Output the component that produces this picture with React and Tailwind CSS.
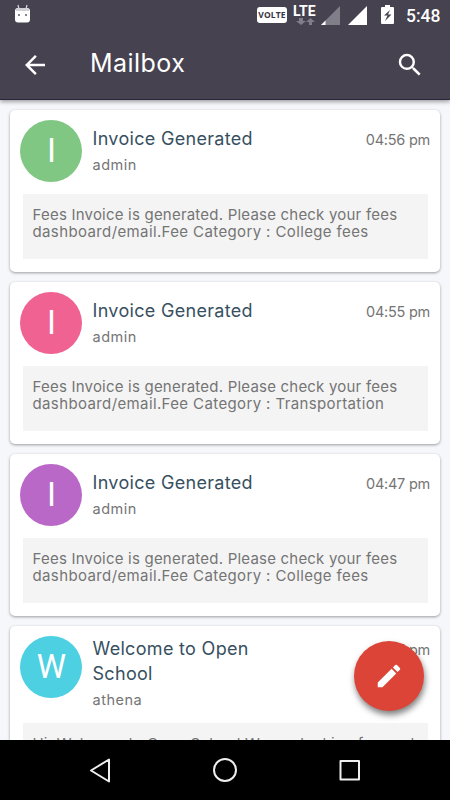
import { MdArrowBack, MdEdit, MdSearch } from 'react-icons/md'

const mails = [
  {
    letter: 'I',
    color: 'bg-[#81c784]',
    title: ['Invoice Generated'],
    from: 'admin',
    time: '04:56 pm',
    body: ['Fees Invoice is generated. Please check your fees', 'dashboard/email.Fee Category : College fees'],
  },
  {
    letter: 'I',
    color: 'bg-[#f06292]',
    title: ['Invoice Generated'],
    from: 'admin',
    time: '04:55 pm',
    body: ['Fees Invoice is generated. Please check your fees', 'dashboard/email.Fee Category : Transportation'],
  },
  {
    letter: 'I',
    color: 'bg-[#ba68c8]',
    title: ['Invoice Generated'],
    from: 'admin',
    time: '04:47 pm',
    body: ['Fees Invoice is generated. Please check your fees', 'dashboard/email.Fee Category : College fees'],
  },
  {
    letter: 'W',
    color: 'bg-[#4dd0e1]',
    title: ['Welcome to Open', 'School'],
    from: 'athena',
    time: '1:11 pm',
    body: ['Hi, Welcome to Open School.We are looking forward'],
  },
]

function StatusBar() {
  return (
    <div className="flex h-8 justify-between">
      <svg className="mt-[4px] ml-[14px]" width="17" height="19" viewBox="0 0 17 19">
        <path d="M4 1l1 4M13 1l-1 4" stroke="#d8d7dc" strokeWidth="1.2" />
        <rect x="1" y="4" width="15" height="14.5" rx="3" fill="#fff" />
        <path d="M2 7V6q0-2 3-2h7q3 0 3 2v1z" fill="#d0cfd3" />
        <rect x="4" y="10" width="2" height="2" fill="#85838c" />
        <rect x="11" y="10" width="2" height="2" fill="#85838c" />
      </svg>
      <div className="flex">
        <div className="mt-[7px] flex h-4 w-[30px] items-center justify-center rounded-[3px] bg-white font-['Open_Sans',sans-serif] text-[8.5px] font-bold tracking-[0.1px] text-[#393544]">
          VOLTE
        </div>
        <div className="mt-[4px] ml-[6px] w-[23px] font-['Roboto',sans-serif] text-[14px] leading-[14px] font-bold text-white">
          <div>LTE</div>
          <svg className="ml-[3px]" width="19" height="7" viewBox="0 0 19 7">
            <path d="M3 0h4v3h3L5 7 0 3h3zM14.500 0l4.500 4h-3v3h-3V4h-3z" fill="#807e88" />
          </svg>
        </div>
        <svg className="mt-[6px] ml-[5px]" width="19" height="19" viewBox="0 0 19 19">
          <path d="M19 0v19H0z" fill="#807e88" />
          <path d="M4.500 14.500V19H0z" fill="#fff" />
        </svg>
        <svg className="mt-[6px] ml-[8px]" width="19" height="19" viewBox="0 0 19 19">
          <path d="M19 0v19H0z" fill="#fff" />
        </svg>
        <svg className="mt-[5px] ml-[14px]" width="13" height="19" viewBox="0 0 13 19">
          <path d="M4 0h5v2h3q1 0 1 1v15q0 1-1 1H1q-1 0-1-1V3q0-1 1-1h3z" fill="#fff" />
          <path d="M9 5L3 10.500h3.500L4 16l6.500-6.500H7z" fill="#464250" />
        </svg>
        <span className="mt-[6px] mr-[10px] ml-[12px] w-[34px] font-['Roboto',sans-serif] text-[17.5px] leading-5 font-medium whitespace-nowrap text-white">
          5:48
        </span>
      </div>
    </div>
  )
}

function MailCard({ mail }) {
  // the first line is set a little tighter than the second
  const tracking = ['tracking-[0.21px]', 'tracking-[0.38px]']
  const timeOffset = mail.title.length > 1 ? 'mt-[3px]' : 'mt-[9px]'

  return (
    <article className="shrink-0 rounded-[5px] bg-white px-[10px] pt-[10px] pb-[13px] shadow-[0_1px_3px_rgba(0,0,0,0.38)]">
      <div className="flex">
        <div
          className={`flex size-[62px] shrink-0 items-center justify-center rounded-full pl-px font-['Roboto',sans-serif] text-[33px] text-white ${mail.color}`}
        >
          {mail.letter}
        </div>
        <div className="ml-[10.5px] flex flex-1 flex-col justify-center pt-px">
          {mail.title.map((line) => (
            <h2
              key={line}
              className="text-[18px] leading-[24.5px] font-normal tracking-[0.31px] whitespace-nowrap text-[#37505f]"
            >
              {line}
            </h2>
          ))}
          <p className="mt-[3px] text-[14.5px] leading-[22px] tracking-[0.5px] text-[#757575]">{mail.from}</p>
        </div>
        <time
          className={`h-[22px] text-[14.5px] leading-[22px] tracking-[-0.25px] whitespace-nowrap text-[#757575] ${timeOffset}`}
        >
          {mail.time}
        </time>
      </div>
      <div className="mx-[2.5px] mt-[11.5px] h-[65.5px] bg-[#f4f4f4] px-[10px] pt-[12.5px]">
        {mail.body.map((line, i) => (
          <p key={line} className={`text-[15px] leading-[17px] whitespace-nowrap text-[#757575] ${tracking[i]}`}>
            {line}
          </p>
        ))}
      </div>
    </article>
  )
}

function NavBar() {
  return (
    <nav className="relative flex h-[60px] shrink-0 items-center justify-center bg-black">
      <svg width="272" height="26" viewBox="0 0 272 26" fill="none" stroke="#eee" strokeWidth="2" strokeLinejoin="round">
        <path d="M20 2.500v22L2 13.500z" />
        <circle cx="136" cy="13" r="11" />
        <rect x="251.500" y="4" width="18.500" height="18.500" />
      </svg>
    </nav>
  )
}

function App() {
  return (
    <div className="relative flex h-[800px] w-[450px] flex-col overflow-hidden bg-[#f6f7fb] font-['Inter',sans-serif]">
      <header className="relative z-10 h-[100px] shrink-0 border-b border-[#2c2539] bg-[#464250] shadow-[0_2px_4px_rgba(0,0,0,0.35)]">
        <StatusBar />
        <div className="flex h-[66px] items-center text-white">
          <MdArrowBack className="ml-[20px] size-[30px]" />
          <h1 className="ml-[40px] flex-1 pb-[5px] text-[25px] leading-8 font-normal tracking-[0.45px]">Mailbox</h1>
          <MdSearch className="mr-[25px] size-[30px]" />
        </div>
      </header>
      <main className="flex min-h-0 flex-1 flex-col gap-[10px] overflow-hidden px-[10px] pt-[10px]">
        {mails.map((mail) => (
          <MailCard key={mail.time} mail={mail} />
        ))}
      </main>
      <button
        className="absolute top-[641px] left-[354px] flex size-[70px] items-center justify-center rounded-full bg-[#db4437] text-white shadow-[1px_4px_6px_rgba(0,0,0,0.5)]"
        aria-label="Compose"
      >
        <MdEdit className="size-[30px]" />
      </button>
      <NavBar />
    </div>
  )
}

export default App
